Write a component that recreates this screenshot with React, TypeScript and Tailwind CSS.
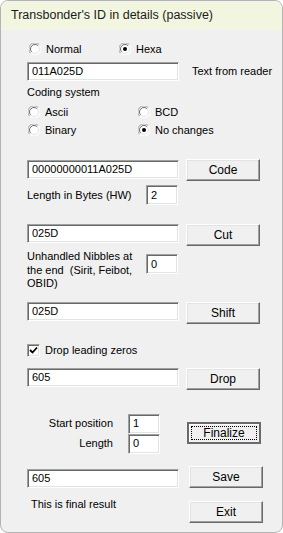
import React from "react";

const font = { fontFamily: '"Liberation Sans", Arial, sans-serif' };

const Radio = ({ checked }: { checked?: boolean }) => (
  <svg width="12" height="12" viewBox="0 0 12 12" className="shrink-0">
    <circle cx="6" cy="6" r="5.5" fill="#ffffff" />
    <path d="M1.6 10.4 A5.5 5.5 0 0 1 10.4 1.6" fill="none" stroke="#a0a0a0" strokeWidth="1" />
    <path d="M2.8 9.2 A4.5 4.5 0 0 1 9.2 2.8" fill="none" stroke="#696969" strokeWidth="1" />
    <path d="M10.4 1.6 A5.5 5.5 0 0 1 1.6 10.4" fill="none" stroke="#ffffff" strokeWidth="1" />
    <path d="M9.2 2.8 A4.5 4.5 0 0 1 2.8 9.2" fill="none" stroke="#e3e3e3" strokeWidth="1" />
    {checked && <circle cx="6" cy="6" r="2" fill="#000000" />}
  </svg>
);

const RadioItem = ({ label, checked }: { label: string; checked?: boolean }) => (
  <div className="flex items-center gap-[5px]">
    <Radio checked={checked} />
    <span>{label}</span>
  </div>
);

const TextBox = ({ value, className }: { value: string; className: string }) => (
  <div
    className={
      "flex items-center bg-white pl-[4px] border border-t-[#a0a0a0] border-l-[#a0a0a0] border-r-[#ffffff] border-b-[#ffffff] shadow-[inset_1px_1px_0_#696969,inset_-1px_-1px_0_#e3e3e3] " +
      className
    }
  >
    {value}
  </div>
);

const Button = ({ label, className }: { label: string; className: string }) => (
  <div
    className={
      "flex items-center justify-center bg-[#f0f0f0] border border-t-[#ffffff] border-l-[#ffffff] border-r-[#696969] border-b-[#696969] shadow-[inset_-1px_-1px_0_#a0a0a0,inset_1px_1px_0_#e3e3e3] " +
      className
    }
  >
    {label}
  </div>
);

export default function App() {
  return (
    <div className="w-[283px] h-[533px] bg-white" style={font}>
      <div className="w-[283px] h-[533px] rounded-[8px] border border-[#b4b4b4] bg-[#f0f0f0] overflow-hidden flex flex-col text-[11px] text-black">
        <div className="h-[29px] shrink-0 bg-[#f2f6e0] flex items-center pl-[10px] text-[12.5px] text-[#1b1b1b]">
          Transbonder's ID in details (passive)
        </div>

        <div className="flex flex-col pl-[26px]">
          {/* format */}
          <div className="mt-[12px] h-[14px] flex items-center">
            <div className="w-[92px] pl-[2px]">
              <RadioItem label="Normal" />
            </div>
            <RadioItem label="Hexa" checked />
          </div>

          <div className="mt-[6px] flex items-center">
            <TextBox value="011A025D" className="w-[152px] h-[19px]" />
            <span className="ml-[13px]">Text from reader</span>
          </div>

          <div className="mt-[5px] h-[13px] leading-[13px]">Coding system</div>

          <div className="mt-[6px] h-[14px] flex items-center">
            <div className="w-[111px] pl-[1px]">
              <RadioItem label="Ascii" />
            </div>
            <RadioItem label="BCD" />
          </div>
          <div className="mt-[4px] h-[14px] flex items-center">
            <div className="w-[111px] pl-[1px]">
              <RadioItem label="Binary" />
            </div>
            <RadioItem label="No changes" checked />
          </div>

          {/* code */}
          <div className="mt-[22px] flex items-start">
            <TextBox value="00000000011A025D" className="w-[152px] h-[19px] mt-[1px]" />
            <Button label="Code" className="ml-[7px] w-[74px] h-[22px] text-[12px]" />
          </div>

          <div className="mt-[4px] flex items-center">
            <span className="w-[119px]">Length in Bytes (HW)</span>
            <TextBox value="2" className="w-[32px] h-[20px]" />
          </div>

          {/* cut */}
          <div className="mt-[19px] flex items-start">
            <TextBox value="025D" className="w-[152px] h-[19px]" />
            <Button label="Cut" className="ml-[7px] w-[74px] h-[22px] text-[12px]" />
          </div>

          <div className="mt-[4px] flex items-start">
            <div className="w-[119px] leading-[13.5px]">
              Unhandled Nibbles at the end&nbsp; (Sirit, Feibot, OBID)
            </div>
            <TextBox value="0" className="w-[32px] h-[20px] mt-[4px]" />
          </div>

          {/* shift */}
          <div className="mt-[11px] flex items-start">
            <TextBox value="025D" className="w-[152px] h-[19px]" />
            <Button label="Shift" className="ml-[7px] w-[74px] h-[22px] text-[12px]" />
          </div>

          <div className="mt-[20px] h-[13px] flex items-center gap-[5px]">
            <div className="w-[13px] h-[13px] bg-white border border-t-[#a0a0a0] border-l-[#a0a0a0] border-r-[#ffffff] border-b-[#ffffff] shadow-[inset_1px_1px_0_#696969,inset_-1px_-1px_0_#e3e3e3] flex items-center justify-center">
              <svg width="9" height="9" viewBox="0 0 9 9">
                <path d="M1 4 L3.5 6.5 L8 1.5" fill="none" stroke="#000" strokeWidth="1.8" />
              </svg>
            </div>
            <span>Drop leading zeros</span>
          </div>

          {/* drop */}
          <div className="mt-[11px] flex items-start">
            <TextBox value="605" className="w-[152px] h-[19px]" />
            <Button label="Drop" className="ml-[7px] w-[74px] h-[22px] text-[12px]" />
          </div>

          {/* finalize */}
          <div className="mt-[24px] flex items-start">
            <div className="flex flex-col w-[133px]">
              <div className="flex items-center h-[20px]">
                <span className="w-[86px] text-right">Start position</span>
                <TextBox value="1" className="ml-[15px] w-[32px] h-[20px]" />
              </div>
              <div className="flex items-center h-[20px]">
                <span className="w-[86px] text-right">Length</span>
                <TextBox value="0" className="ml-[15px] w-[32px] h-[20px]" />
              </div>
            </div>
            <div className="mt-[8px] ml-[27px] w-[74px] h-[22px] bg-[#f0f0f0] border-2 border-[#6a6a6a] shadow-[inset_1px_1px_0_#ffffff] p-[2px] text-[12px]">
              <div className="w-full h-full border border-dotted border-black flex items-center justify-center">
                Finalize
              </div>
            </div>
          </div>

          {/* save */}
          <div className="mt-[12px] flex items-start">
            <TextBox value="605" className="w-[152px] h-[19px] mt-[3px]" />
            <Button label="Save" className="ml-[10px] w-[74px] h-[22px] text-[12px]" />
          </div>

          <div className="mt-[13px] flex items-start">
            <span className="w-[162px] pl-[4px] leading-[13px] mt-[-3px]">This is final result</span>
            <Button label="Exit" className="w-[74px] h-[22px] text-[12px]" />
          </div>
        </div>
      </div>
    </div>
  );
}
